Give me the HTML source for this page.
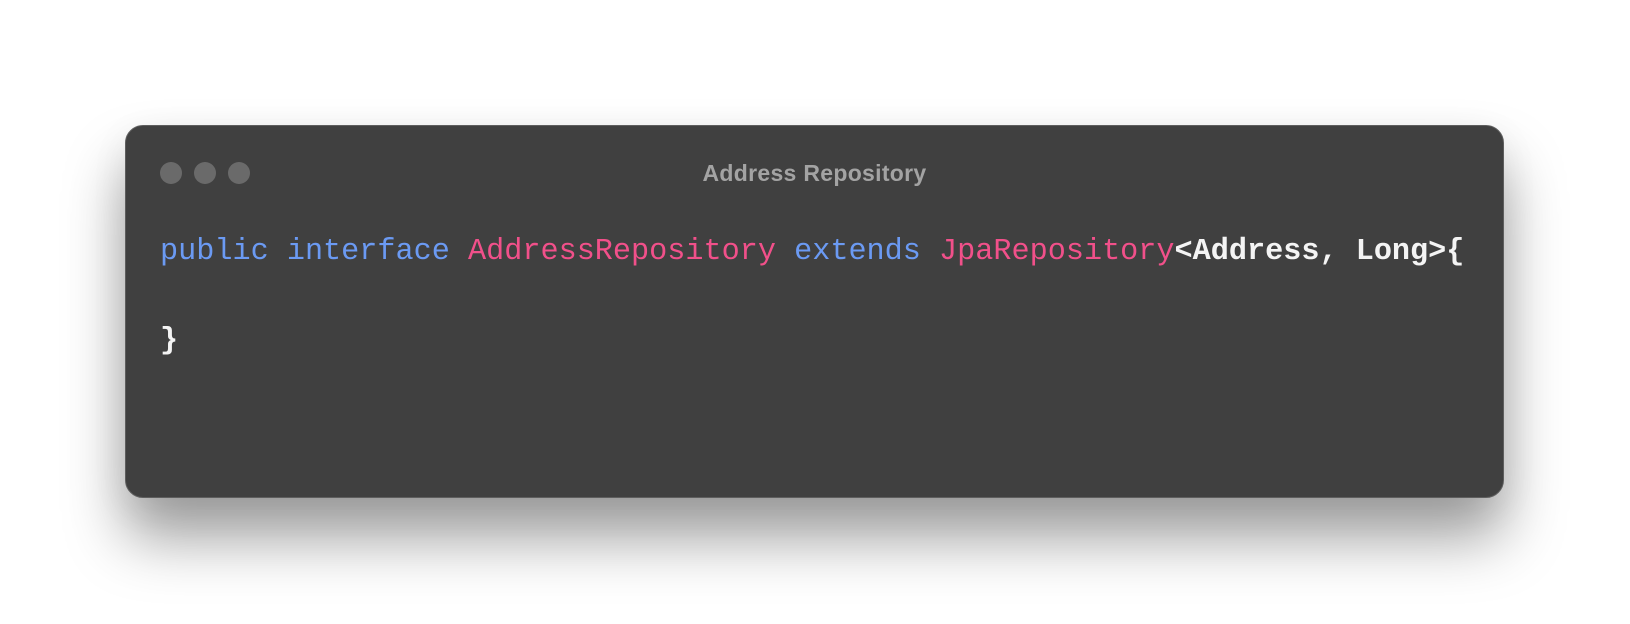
<!DOCTYPE html>
<html><head><style>
html,body{margin:0;padding:0;width:1630px;height:624px;background:#fff;overflow:hidden}
.win{position:absolute;left:125px;top:125px;width:1379px;height:373px;box-sizing:border-box;background:#404040;border:1.5px solid #5e5e5e;border-radius:18px;box-shadow:0 40px 60px rgba(0,0,0,0.38),0 10px 40px rgba(0,0,0,0.06)}
.dot{position:absolute;top:36px;width:22px;height:22px;border-radius:50%;background:#6a6a6a}
.title{position:absolute;left:0;right:0;top:34px;text-align:center;font:bold 23px "Liberation Sans",sans-serif;color:#a3a3a3;letter-spacing:0.3px}
.code{position:absolute;left:34px;top:104px;font:bold 30.2px/44.5px "Liberation Mono",monospace;color:#f4f4f4;white-space:pre;margin:0}
.k{color:#6b9af3;font-weight:normal}.t{color:#f1508a;font-weight:normal}
</style></head><body>
<div class="win">
<div class="dot" style="left:34px"></div><div class="dot" style="left:68px"></div><div class="dot" style="left:102px"></div>
<div class="title">Address Repository</div>
<pre class="code"><span class="k">public</span> <span class="k">interface</span> <span class="t">AddressRepository</span> <span class="k">extends</span> <span class="t">JpaRepository</span>&lt;Address, Long&gt;{

}</pre>
</div>
</body></html>
